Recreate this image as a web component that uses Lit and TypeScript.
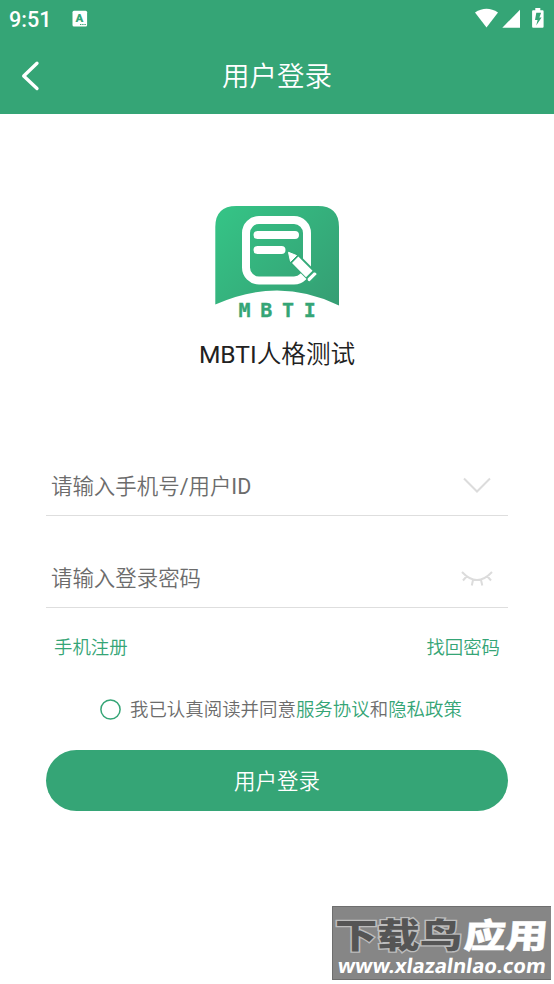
import { LitElement, html, css } from "lit";
import { customElement } from "lit/decorators.js";

@customElement("status-bar")
class StatusBar extends LitElement {
  static styles = css`
    :host { display: flex; align-items: center; height: 38px; padding: 0 9px; box-sizing: border-box; color: #fff; }
    .time { font: 500 21.6px/38px Roboto, sans-serif; width: 63px; padding-top: 2px; }
    .grow { flex: 1; }
    svg { display: block; flex: none; }
    .a { font: 900 11.5px Roboto, sans-serif; fill: #35a576; }
  `;
  render() {
    return html`
      <span class="time">9:51</span>
      <svg width="16" height="18" viewBox="0 0 16 18">
        <rect x="0.5" y="0.8" width="14.6" height="15.6" rx="1.5" fill="#fff" />
        <text class="a" x="3.4" y="12.2">A</text>
        <path d="M8 14.500h6.200" stroke="#35a576" stroke-width="1.1" stroke-dasharray="1.4 .8" />
      </svg>
      <span class="grow"></span>
      <svg width="70" height="38" viewBox="475 0 70 38">
        <path d="M475 12.5Q486.500 5 498 12.500L486.500 27.500Z" fill="#fff" />
        <path d="M520 9.700V27.700H502.300Z" fill="#fff" />
        <path d="M535.300 8h5v2.200h2.300q1 0 1 1v15.400q0 1.200-1 1.200h-9.500q-1 0-1-1.200V11.200q0-1 1-1h2.200z" fill="#fff" />
        <path d="M536.300 12.800h4.800l-1.700 4.800h2.200l-5.400 8 1.400-5.600h-2.600z" fill="#35a576" />
      </svg>
    `;
  }
}

@customElement("app-logo")
class AppLogo extends LitElement {
  static styles = css`
    :host { display: block; width: 124px; height: 113px; }
    svg { display: block; overflow: visible; }
    text { font: 700 20px "DejaVu Sans Mono", monospace; fill: #35a576; stroke: #35a576; stroke-width: .3px; }
  `;
  render() {
    return html`
      <svg width="124" height="113" viewBox="215 205 124 113">
        <defs>
          <linearGradient id="g" gradientUnits="userSpaceOnUse" x1="225" y1="212" x2="335" y2="312">
            <stop offset="0" stop-color="#35c285" />
            <stop offset="1" stop-color="#359d73" />
          </linearGradient>
        </defs>
        <path d="M215.300 304.500V227q0-21 21-21H318q21 0 21 21v78.500Q279 276 215.300 304.500Z" fill="url(#g)" />
        <rect x="246" y="220" width="61" height="60.500" rx="13" fill="none" stroke="#fff" stroke-width="8" />
        <path d="M257.500 235h37.500M257.500 250h24" stroke="#fff" stroke-width="8" stroke-linecap="round" />
        <path d="M292 256 315.500 279.500" stroke="#34aa78" stroke-width="12" />
        <path d="M288.500 252.300 296.500 255.500 290.500 261.500Z" fill="#fff" stroke="#fff" stroke-linejoin="round" />
        <path d="m298.300 256.500 14.200 14.200-6.500 6.500-14-14.200zM313.800 272.500q2.500-.6 2.800 1.700l-7 7q-2.400-.2-1.900-2.700z" fill="#fff" />
        <text x="238.500" y="317.200">M</text>
        <text x="260.300" y="317.200">B</text>
        <text x="282" y="317.200">T</text>
        <text x="303.700" y="317.200">I</text>
      </svg>
    `;
  }
}

@customElement("site-watermark")
class SiteWatermark extends LitElement {
  static styles = css`
    :host { display: block; width: 219px; height: 74px; }
    svg { display: block; }
    .cn { font: 900 34px "Noto Sans CJK SC", sans-serif; }
    .dark { fill: #555; stroke: #bdbdbd; stroke-width: 2.6px; paint-order: stroke; }
    .light { fill: #fff; stroke: #fff; stroke-width: .4px; }
    .url { font: 700 20px "Noto Sans", sans-serif; fill: #fff; }
  `;
  render() {
    return html`
      <svg width="219" height="74" viewBox="332 906 219 74">
        <rect x="332" y="906" width="219" height="74" fill="#868686" />
        <path d="M332.500 980V906.500H551" fill="none" stroke="#6e6e6e" />
        <path d="M332 979.500H551" stroke="#6e6e6e" />
        <g class="cn">
          <text class="dark" x="335" y="948" textLength="127" lengthAdjust="spacingAndGlyphs">下载鸟</text>
          <g transform="translate(82.900 0) skewX(-5)">
            <text class="light" x="463" y="948" textLength="84" lengthAdjust="spacingAndGlyphs">应用</text>
          </g>
        </g>
        <g transform="translate(136.700 0) skewX(-8)">
          <text class="url" x="337" y="973" textLength="208" lengthAdjust="spacingAndGlyphs">www.xlazalnlao.com</text>
        </g>
      </svg>
    `;
  }
}

@customElement("app-root")
class AppRoot extends LitElement {
  static styles = css`
    :host {
      display: block; position: relative; width: 554px; height: 984px; overflow: hidden; background: #fff;
      font-family: Roboto, "Noto Sans CJK SC", sans-serif; font-weight: 350; color: #6c6c6c;
    }
    svg { display: block; flex: none; }
    .latin { font-weight: 400; }
    .top { background: #35a576; height: 114px; }
    .nav { display: grid; grid-template-columns: 60px 1fr 60px; align-items: center; height: 76px; }
    .title { text-align: center; color: #fff; font-size: 27.500px; line-height: 40px; padding-top: 2px; }
    .brand { display: flex; flex-direction: column; align-items: center; padding-top: 91px; }
    .name { margin-top: 19px; font-size: 24.600px; line-height: 36px; color: #212121; white-space: nowrap; }
    .form { padding: 0 46px; margin-top: 83px; }
    .field {
      display: flex; align-items: center; justify-content: space-between; box-sizing: border-box;
      height: 60px; padding: 0 14px 2px 5px; border-bottom: 1.500px solid #dedede; font-size: 21.450px;
    }
    .field + .field { margin-top: 32px; }
    .links { display: flex; justify-content: space-between; padding: 0 8px; margin-top: 26px; font-size: 18.400px; line-height: 28px; color: #35a576; }
    .agree { display: flex; align-items: center; margin: 34px 0 0 54px; font-size: 18.450px; line-height: 28px; white-space: nowrap; }
    .radio { margin: 0 9px 1px 0; }
    .link { color: #35a576; }
    .submit {
      display: flex; align-items: center; justify-content: center; box-sizing: border-box; height: 61px; margin-top: 26px;
      padding-bottom: 2px; border-radius: 31px; background: #35a576; color: #fff; font-size: 21.500px;
    }
    .mark { position: absolute; left: 332px; top: 906px; }
  `;
  render() {
    return html`
      <header class="top">
        <status-bar></status-bar>
        <div class="nav">
          <svg width="60" height="76" viewBox="0 38 60 76">
            <path d="M37 63.200 23.700 76l13.300 12.500" fill="none" stroke="#fff" stroke-width="3.300" stroke-linecap="round" stroke-linejoin="round" />
          </svg>
          <div class="title">用户登录</div>
        </div>
      </header>
      <section class="brand">
        <app-logo></app-logo>
        <div class="name"><span class="latin">MBTI</span>人格测试</div>
      </section>
      <main class="form">
        <div class="field">
          <span>请输入手机号<span class="latin">/</span>用户<span class="latin">ID</span></span>
          <svg width="34" height="24" viewBox="460 473 34 24">
            <path d="M464 478.500 477 491.500 490 478.500" fill="none" stroke="#dcdcdc" stroke-width="2" />
          </svg>
        </div>
        <div class="field">
          <span>请输入登录密码</span>
          <svg width="34" height="24" viewBox="460 565 34 24">
            <path d="M462 572Q477 588 492 572M466.500 576.500 463 580.500M473 580 471.800 585.500M481 580 482.300 585.500M487.500 576.500 491 580.500" fill="none" stroke="#dcdcdc" stroke-width="2" />
          </svg>
        </div>
        <div class="links"><span>手机注册</span><span>找回密码</span></div>
        <div class="agree">
          <svg class="radio" width="21" height="21" viewBox="0 0 21 21">
            <circle cx="10.500" cy="10.500" r="9.600" fill="none" stroke="#35a576" stroke-width="1.500" />
          </svg>
          <span>我已认真阅读并同意<span class="link">服务协议</span>和<span class="link">隐私政策</span></span>
        </div>
        <div class="submit">用户登录</div>
      </main>
      <site-watermark class="mark"></site-watermark>
    `;
  }
}
